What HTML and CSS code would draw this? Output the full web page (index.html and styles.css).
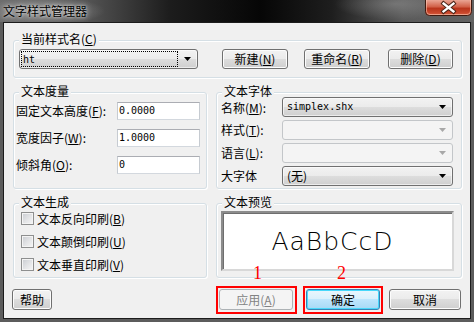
FILE: index.html
```html
<!DOCTYPE html>
<html>
<head>
<meta charset="utf-8">
<link rel="stylesheet" href="styles.css">
</head>
<body>
<div class="window">
  <div class="titlebar">
    <span class="title">文字样式管理器</span>
    <div class="close">
      <svg width="47" height="16" viewBox="0 0 47 16">
        <defs>
          <linearGradient id="cg" x1="0" y1="0" x2="0" y2="1">
            <stop offset="0" stop-color="#eaa594"/>
            <stop offset="0.42" stop-color="#d2634b"/>
            <stop offset="0.55" stop-color="#b9351c"/>
            <stop offset="0.85" stop-color="#cb4a2e"/>
            <stop offset="1" stop-color="#de6f52"/>
          </linearGradient>
        </defs>
        <path d="M0.5 0 V11.5 Q0.5 15.5 4.5 15.5 H42.5 Q46.5 15.5 46.5 11.5 V0" fill="url(#cg)" stroke="#3e1a10"/>
        <path d="M1.5 0 V11 Q1.5 14.5 5 14.5 H42 Q45.5 14.5 45.5 11 V0" fill="none" stroke="rgba(255,210,190,0.55)"/>
        <path d="M18.5 3.5 L28.5 11.5 M28.5 3.5 L18.5 11.5" stroke="#4a2418" stroke-width="4.2" stroke-linecap="square"/>
        <path d="M18.5 3.5 L28.5 11.5 M28.5 3.5 L18.5 11.5" stroke="#ffffff" stroke-width="2.3" stroke-linecap="square"/>
      </svg>
    </div>
  </div>

  <div class="client">
    <div class="group g-current">
      <div class="gtitle">当前样式名(<u>C</u>)</div>
      <div class="row-current">
        <div class="combo w-ht">
          <span class="focusbox"><span class="mono">ht</span></span>
          <span class="arrow"><svg width="7" height="4" viewBox="0 0 7 4"><path d="M0 0 H7 L3.5 4 Z" fill="#000"/></svg></span>
        </div>
        <div class="btn b-new">新建(<u>N</u>)</div>
        <div class="btn b-ren">重命名(<u>R</u>)</div>
        <div class="btn b-del">删除(<u>D</u>)</div>
      </div>
    </div>

    <div class="grow g-row2">
      <div class="group g-metric">
        <div class="gtitle">文本度量</div>
        <div class="rows r-metric">
          <div class="frow"><span class="lbl l-metric">固定文本高度(<u>F</u>):</span><span class="tinput mono">0.0000</span></div>
          <div class="frow"><span class="lbl l-metric">宽度因子(<u>W</u>):</span><span class="tinput mono">1.0000</span></div>
          <div class="frow"><span class="lbl l-metric">倾斜角(<u>O</u>):</span><span class="tinput mono">0</span></div>
        </div>
      </div>
      <div class="group g-font">
        <div class="gtitle">文本字体</div>
        <div class="rows r-font">
          <div class="frow"><span class="lbl l-font l-first">名称(<u>M</u>):</span>
            <div class="combo w-font"><span class="ctext mono">simplex.shx</span><span class="arrow"><svg width="7" height="4" viewBox="0 0 7 4"><path d="M0 0 H7 L3.5 4 Z" fill="#000"/></svg></span></div>
          </div>
          <div class="frow"><span class="lbl l-font">样式(<u>T</u>):</span>
            <div class="combo combo-dis w-font"><span class="ctext"></span><span class="arrow"><svg width="7" height="4" viewBox="0 0 7 4"><path d="M0 0 H7 L3.5 4 Z" fill="#a8a8a8"/></svg></span></div>
          </div>
          <div class="frow"><span class="lbl l-font">语言(<u>L</u>):</span>
            <div class="combo combo-dis w-font"><span class="ctext"></span><span class="arrow"><svg width="7" height="4" viewBox="0 0 7 4"><path d="M0 0 H7 L3.5 4 Z" fill="#a8a8a8"/></svg></span></div>
          </div>
          <div class="frow"><span class="lbl l-font">大字体</span>
            <div class="combo w-font"><span class="ctext">(无)</span><span class="arrow"><svg width="7" height="4" viewBox="0 0 7 4"><path d="M0 0 H7 L3.5 4 Z" fill="#000"/></svg></span></div>
          </div>
        </div>
      </div>
    </div>

    <div class="grow g-row3">
      <div class="group g-gen">
        <div class="gtitle">文本生成</div>
        <div class="rows r-gen">
          <div class="crow"><span class="cb"></span><span class="clbl">文本反向印刷(<u>B</u>)</span></div>
          <div class="crow"><span class="cb"></span><span class="clbl">文本颠倒印刷(<u>U</u>)</span></div>
          <div class="crow"><span class="cb"></span><span class="clbl">文本垂直印刷(<u>V</u>)</span></div>
        </div>
      </div>
      <div class="group g-prev">
        <div class="gtitle">文本预览</div>
        <div class="preview"><span class="ptext">AaBbCcD</span></div>
      </div>
    </div>

    <div class="bottom">
      <div class="btn bb b-help">帮助</div>
      <div class="btn bb btn-dis b-apply">应用(<u>A</u>)</div>
      <div class="btn bb btn-def b-ok">确定</div>
      <div class="btn bb b-cancel">取消</div>
    </div>
  </div>

  <div class="mark box1"></div>
  <div class="mark box2"></div>
  <span class="num n1">1</span>
  <span class="num n2">2</span>
</div>
</body>
</html>
```

FILE: styles.css
```css
* { box-sizing: border-box; }
body { margin: 0; background: #ffffff; }

.window {
  width: 474px;
  height: 322px;
  position: relative;
  display: flex;
  flex-direction: column;
  background: #5c5c5c;
  font-family: "Noto Sans CJK SC", sans-serif;
  font-size: 12px;
  color: #000;
}

u { text-decoration: underline; text-underline-offset: 1px; }

.titlebar {
  height: 22px;
  display: flex;
  justify-content: space-between;
  align-items: flex-start;
  padding: 0 2px 0 3px;
  background:
    radial-gradient(ellipse 60px 14px at 45px 11px, rgba(190,190,190,0.55), rgba(190,190,190,0) 100%),
    radial-gradient(ellipse 60px 16px at 395px 4px, rgba(150,150,150,0.5), rgba(150,150,150,0) 100%),
    linear-gradient(90deg, #6e6e6e 0%, #555 18%, #1c1c1c 36%, #060606 55%, #1e1e1e 70%, #5a5a5a 85%, #626262 100%);
}
.title {
  line-height: 22px;
  font-size: 12px;
  color: #000;
  text-shadow: 0 0 3px rgba(255,255,255,0.8), 0 0 7px rgba(255,255,255,0.6);
}
.close { width: 47px; height: 16px; }
.close svg { display: block; }

.client {
  flex: 1;
  margin: 0 3px 3px 3px;
  background: #f0f0f0;
  border: 1px solid #1c1c1c;
  padding: 17px 8px 0 9px;
  display: flex;
  flex-direction: column;
}

.group {
  border: 1px solid #d5dfe5;
  border-radius: 3px;
  box-shadow: inset 1px 1px 0 #fff, 1px 1px 0 #fff;
}
.gtitle {
  width: fit-content;
  height: 11px;
  line-height: 11px;
  margin-top: -8px;
  padding: 0 2px;
  background: #f0f0f0;
  white-space: nowrap;
}

/* current style group */
.g-current { padding: 0 8px 8px 5px; }
.g-current .gtitle { margin-left: 0; margin-bottom: 5px; }
.row-current { display: flex; height: 20px; }

.mono { font-family: "DejaVu Sans Mono", "Liberation Mono", monospace; font-size: 10px; }

.combo {
  height: 20px;
  display: flex;
  align-items: center;
  border: 1px solid #707070;
  border-radius: 3px;
  background: linear-gradient(#f2f2f2 0%, #ebebeb 50%, #dddddd 51%, #cfcfcf 100%);
  box-shadow: inset 0 0 0 1px rgba(255,255,255,0.6);
}
.combo-dis {
  border-color: #c3c6c9;
  background: #f4f4f4;
  box-shadow: none;
}
.w-ht { width: 179px; }
.w-font { width: 171px; }
.focusbox {
  flex: 1;
  height: 16px;
  margin-left: 1px;
  border: 1px dotted #000;
  display: flex;
  align-items: center;
  padding-left: 1px;
}
.ctext {
  flex: 1;
  padding-left: 4px;
  line-height: 16px;
  white-space: nowrap;
}
.arrow {
  width: 19px;
  height: 16px;
  display: flex;
  align-items: center;
  justify-content: center;
}
.arrow svg { display: block; }

.btn {
  height: 20px;
  display: flex;
  align-items: center;
  justify-content: center;
  border: 1px solid #707070;
  border-radius: 3px;
  background: linear-gradient(#f2f2f2 0%, #ebebeb 49%, #dddddd 50%, #cfcfcf 100%);
  box-shadow: inset 0 0 0 1px #fcfcfc;
  line-height: 14px;
  white-space: nowrap;
}
.b-new { width: 66px; margin-left: 24px; }
.b-ren { width: 66px; margin-left: 16px; }
.b-del { width: 65px; margin-left: 18px; }

/* row 2 */
.grow { display: flex; gap: 9px; margin-top: 14px; }
.g-row2 { height: 97px; }
.g-row3 { height: 75px; }

.g-metric { width: 194px; padding: 0 6px 0 2px; }
.g-metric .gtitle { margin-left: 3px; margin-bottom: 6px; }
.rows { display: flex; flex-direction: column; }
.r-metric { gap: 9px; }
.frow { display: flex; align-items: center; }
.r-metric .frow { height: 18px; }
.lbl { white-space: nowrap; line-height: 14px; }
.l-metric { width: 101px; }
.tinput {
  width: 83px;
  height: 18px;
  background: #fff;
  border: 1px solid;
  border-color: #abadb3 #c6cbd1 #d3d8de #c6cbd1;
  padding-left: 1px;
  line-height: 16px;
}

.g-font { flex: 1; padding: 0 8px 0 4px; }
.g-font .gtitle { margin-left: 1px; margin-bottom: 1px; }
.r-font { gap: 3px; }
.r-font .frow { height: 20px; }
.l-font { width: 61px; }
.l-first { padding-top: 2px; }

/* row 3 */
.g-gen { width: 194px; padding-left: 7px; }
.g-gen .gtitle { margin-left: -2px; margin-bottom: 4px; }
.r-gen { gap: 8px; }
.crow { height: 15px; display: flex; align-items: center; }
.cb {
  width: 13px;
  height: 13px;
  border: 1px solid #8e8f8f;
  background: linear-gradient(135deg, #c9ccd1 0%, #e4e5e7 55%, #f6f6f6 100%);
  box-shadow: inset 0 0 0 1px #f4f4f4;
}
.clbl { margin-left: 3px; line-height: 14px; white-space: nowrap; }

.g-prev { flex: 1; padding-left: 4px; }
.g-prev .gtitle { margin-left: 1px; margin-bottom: 4px; }
.preview {
  width: 233px;
  height: 60px;
  background: #fff;
  border: 2px solid;
  border-color: #8c8c8c #d8d8d8 #d8d8d8 #8c8c8c;
  box-shadow: inset 1px 1px 0 #6e6e6e;
  display: flex;
  align-items: center;
  justify-content: center;
}
.ptext {
  font-family: "DejaVu Sans ExtraLight", "DejaVu Sans", sans-serif;
  font-weight: 200;
  font-size: 25px;
  letter-spacing: 1px;
  line-height: 25px;
  margin-left: -10px;
}

/* bottom */
.bottom { display: flex; margin-top: 11px; margin-left: -1px; margin-right: 1px; }
.bb { height: 21px; }
.b-help { width: 40px; }
.b-apply { width: 74px; margin-left: auto; }
.b-ok { width: 74px; margin-left: 13px; }
.b-cancel { width: 72px; margin-left: 9px; }
.btn-dis {
  border-color: #adb2b5;
  background: #f4f4f4;
  box-shadow: none;
  color: #838383;
}
.btn-def {
  border-color: #3c7fb1;
  background: linear-gradient(#eaf6fd 0%, #d9f0fc 49%, #bee6fd 50%, #a7d9f5 100%);
  box-shadow: inset 0 0 0 1px #48d8fb;
}

/* annotations */
.mark { position: absolute; border: 2px solid #ff0000; height: 28px; top: 286px; }
.box1 { left: 216px; width: 81px; }
.box2 { left: 303px; width: 80px; }
.num {
  position: absolute;
  top: 264px;
  font-family: "Liberation Serif", serif;
  font-size: 18px;
  line-height: 18px;
  color: #ff0000;
}
.n1 { left: 253px; }
.n2 { left: 337px; }
```
